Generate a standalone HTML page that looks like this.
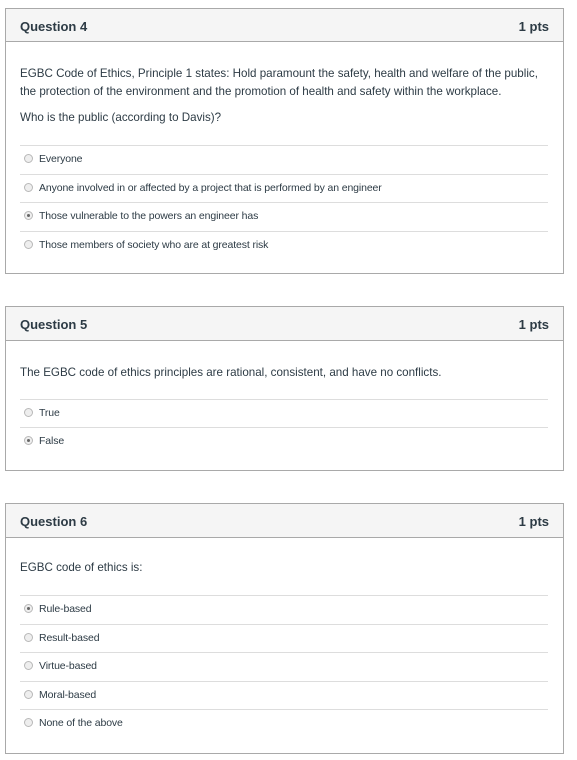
<!DOCTYPE html>
<html><head><style>
body{margin:0;background:#fff;font-family:"Liberation Sans",sans-serif;color:#2d3b45;}
.box{position:absolute;left:5px;width:557px;border:1px solid #a9a9a9;background:#fff;}
.hd{position:absolute;left:0;right:0;top:0;background:#f5f5f5;border-bottom:1px solid #a9a9a9;}
.t{position:absolute;left:14px;font-weight:bold;font-size:13px;color:#2d3b45;}
.p{position:absolute;right:14px;font-weight:bold;font-size:13px;color:#2d3b45;}
.q{position:absolute;left:14px;font-size:11.6px;line-height:18px;white-space:nowrap;}
.ln{position:absolute;left:14px;width:528px;border-top:1px solid #ddd;}
.o{position:absolute;left:33px;font-size:10.5px;letter-spacing:-0.12px;white-space:nowrap;line-height:12px;}
.r{position:absolute;left:18px;width:7px;height:7px;border-radius:50%;border:1px solid #b8b8b8;background:#eee;}
.r.s::after{content:"";position:absolute;left:2px;top:2px;width:3px;height:3px;border-radius:50%;background:#666;}
</style></head><body>

<div class="box" style="top:8px;height:264px;">
<div class="hd" style="height:32px;"></div>
<div class="t" style="top:10px;">Question 4</div>
<div class="p" style="top:10px;">1 pts</div>
<div class="q" style="top:56px;">EGBC Code of Ethics, Principle 1 states: Hold paramount the safety, health and welfare of the public,<br>the protection of the environment and the promotion of health and safety within the workplace.</div>
<div class="q" style="top:100px;">Who is the public (according to Davis)?</div>
<div class="ln" style="top:136px;"></div>
<div class="r" style="top:145px;"></div><div class="o" style="top:144px;">Everyone</div>
<div class="ln" style="top:165px;"></div>
<div class="r" style="top:174px;"></div><div class="o" style="top:173px;">Anyone involved in or affected by a project that is performed by an engineer</div>
<div class="ln" style="top:193px;"></div>
<div class="r s" style="top:202px;"></div><div class="o" style="top:201px;">Those vulnerable to the powers an engineer has</div>
<div class="ln" style="top:222px;"></div>
<div class="r" style="top:231px;"></div><div class="o" style="top:230px;">Those members of society who are at greatest risk</div>
</div>

<div class="box" style="top:306px;height:163px;">
<div class="hd" style="height:33px;"></div>
<div class="t" style="top:10px;">Question 5</div>
<div class="p" style="top:10px;">1 pts</div>
<div class="q" style="top:57px;">The EGBC code of ethics principles are rational, consistent, and have no conflicts.</div>
<div class="ln" style="top:92px;"></div>
<div class="r" style="top:101px;"></div><div class="o" style="top:100px;">True</div>
<div class="ln" style="top:120px;"></div>
<div class="r s" style="top:129px;"></div><div class="o" style="top:128px;">False</div>
</div>

<div class="box" style="top:503px;height:249px;">
<div class="hd" style="height:33px;"></div>
<div class="t" style="top:10px;">Question 6</div>
<div class="p" style="top:10px;">1 pts</div>
<div class="q" style="top:55px;">EGBC code of ethics is:</div>
<div class="ln" style="top:91px;"></div>
<div class="r s" style="top:100px;"></div><div class="o" style="top:99px;">Rule-based</div>
<div class="ln" style="top:120px;"></div>
<div class="r" style="top:129px;"></div><div class="o" style="top:128px;">Result-based</div>
<div class="ln" style="top:148px;"></div>
<div class="r" style="top:157px;"></div><div class="o" style="top:156px;">Virtue-based</div>
<div class="ln" style="top:177px;"></div>
<div class="r" style="top:186px;"></div><div class="o" style="top:185px;">Moral-based</div>
<div class="ln" style="top:205px;"></div>
<div class="r" style="top:214px;"></div><div class="o" style="top:213px;">None of the above</div>
</div>

</body></html>
